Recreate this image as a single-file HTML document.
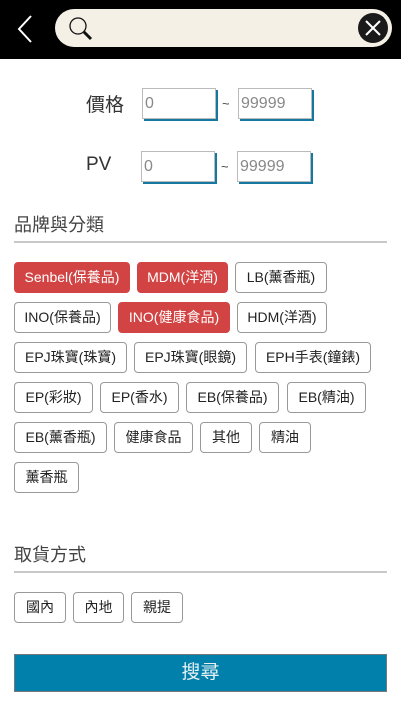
<!DOCTYPE html>
<html><head><meta charset="utf-8"><style>
*{box-sizing:border-box;margin:0;padding:0}
body{width:410px;height:728px;background:#fff;position:relative;overflow:hidden;font-family:"Liberation Sans","Noto Sans CJK TC",sans-serif;color:#222}
.hdr{position:absolute;left:0;top:0;width:401px;height:59px;background:#000}
.pill{position:absolute;left:55px;top:9px;width:337px;height:38px;border-radius:19px;background:#f5f0e6}
.close{position:absolute;left:358px;top:13px;width:30px;height:30px;border-radius:50%;background:#1a1a1a}
.lbl{position:absolute;font-size:19px;color:#333}
.inp{position:absolute;width:74px;height:31px;border:1px solid #bbb;box-shadow:2px 2px 0 #1478a0;font-size:16px;color:#888;padding:6px 0 0 2px;background:#fff}
.tl{position:absolute;font-size:13px;color:#444}
.sec{position:absolute;left:14px;font-size:18px;color:#444}
.line{position:absolute;left:14px;width:373px;height:2px;background:#c8c8c8}
.tag{position:absolute;height:31px;border:1px solid #999;border-radius:4px;font-size:14px;line-height:29px;text-align:center;color:#222;background:#fff}
.on{background:#d24444;border-color:#d24444;color:#fff}
.btn{position:absolute;left:14px;top:654px;width:373px;height:38px;background:#0080ab;border:1px solid #777;color:#e8f0f4;font-size:19px;text-align:center;line-height:36px}
</style></head><body>
<div class="hdr">
<svg style="position:absolute;left:14px;top:14px" width="22" height="30"><path d="M17 2 L5 15 L17 28" stroke="#fff" stroke-width="2" fill="none"/></svg>
<div class="pill">
<svg style="position:absolute;left:12px;top:6px" width="28" height="28"><circle cx="11" cy="11" r="8" stroke="#111" stroke-width="1.3" fill="none"/><path d="M17 17 L24 24" stroke="#111" stroke-width="3"/></svg>
</div>
<div class="close"><svg width="30" height="30"><path d="M8 8 L22 22 M22 8 L8 22" stroke="#fff" stroke-width="2"/></svg></div>
</div>
<div class="lbl" style="left:86px;top:90px">價格</div>
<div class="inp" style="left:142px;top:88px">0</div>
<div class="tl" style="left:222px;top:96px">~</div>
<div class="inp" style="left:238px;top:88px">99999</div>
<div class="lbl" style="left:86px;top:154px">PV</div>
<div class="inp" style="left:141px;top:151px">0</div>
<div class="tl" style="left:221px;top:159px">~</div>
<div class="inp" style="left:237px;top:151px">99999</div>
<div class="sec" style="top:211px">品牌與分類</div>
<div class="line" style="top:241px"></div>
<div class="tag on" style="left:14px;top:262px;width:116px">Senbel(保養品)</div>
<div class="tag on" style="left:137px;top:262px;width:91px">MDM(洋酒)</div>
<div class="tag" style="left:235px;top:262px;width:92px">LB(薰香瓶)</div>
<div class="tag" style="left:14px;top:302px;width:97px">INO(保養品)</div>
<div class="tag on" style="left:118px;top:302px;width:112px">INO(健康食品)</div>
<div class="tag" style="left:237px;top:302px;width:90px">HDM(洋酒)</div>
<div class="tag" style="left:14px;top:342px;width:113px">EPJ珠寶(珠寶)</div>
<div class="tag" style="left:134px;top:342px;width:113px">EPJ珠寶(眼鏡)</div>
<div class="tag" style="left:255px;top:342px;width:116px">EPH手表(鐘錶)</div>
<div class="tag" style="left:14px;top:382px;width:79px">EP(彩妝)</div>
<div class="tag" style="left:100px;top:382px;width:79px">EP(香水)</div>
<div class="tag" style="left:186px;top:382px;width:93px">EB(保養品)</div>
<div class="tag" style="left:287px;top:382px;width:79px">EB(精油)</div>
<div class="tag" style="left:14px;top:422px;width:93px">EB(薰香瓶)</div>
<div class="tag" style="left:114px;top:422px;width:79px">健康食品</div>
<div class="tag" style="left:200px;top:422px;width:52px">其他</div>
<div class="tag" style="left:259px;top:422px;width:52px">精油</div>
<div class="tag" style="left:14px;top:462px;width:65px">薰香瓶</div>
<div class="sec" style="top:541px">取貨方式</div>
<div class="line" style="top:571px"></div>
<div class="tag" style="left:14px;top:592px;width:52px">國內</div>
<div class="tag" style="left:73px;top:592px;width:51px">內地</div>
<div class="tag" style="left:131px;top:592px;width:52px">親提</div>
<div class="btn">搜尋</div>
</body></html>
